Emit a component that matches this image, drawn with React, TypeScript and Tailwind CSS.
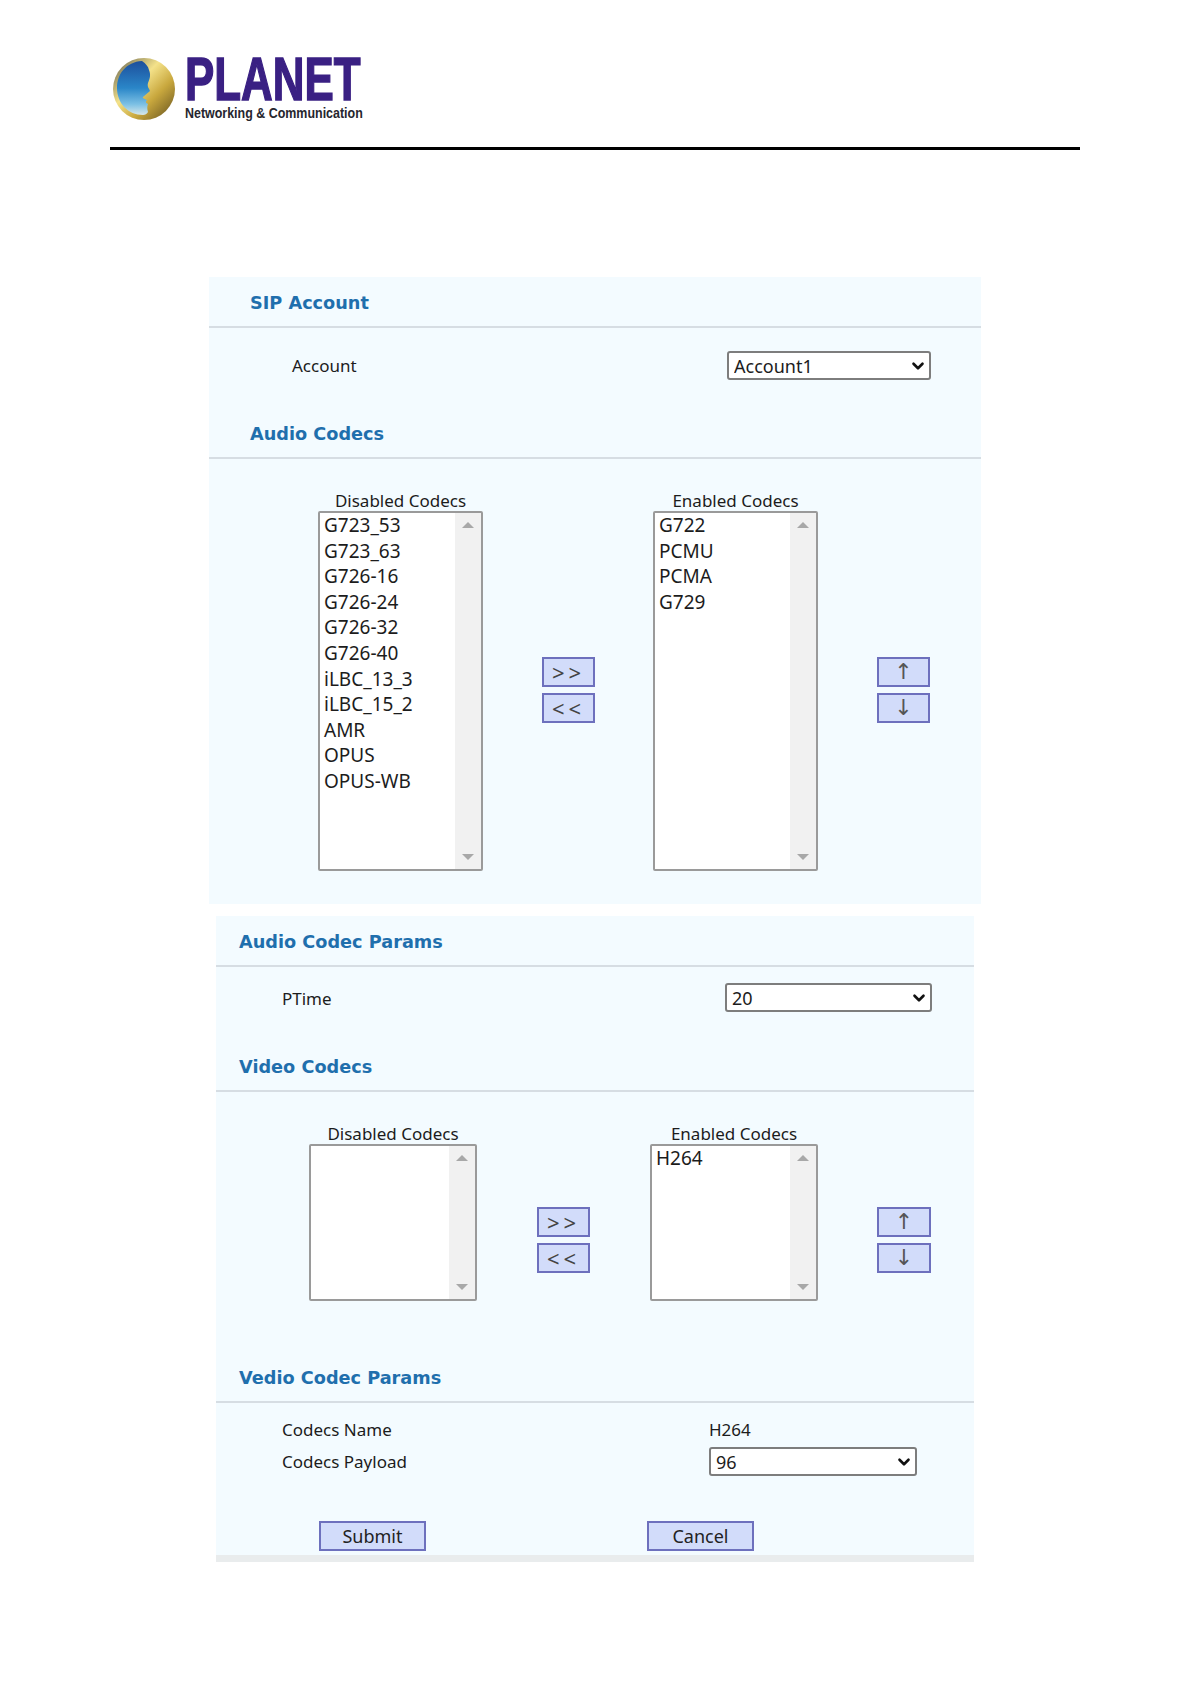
import React from 'react';
import { ChevronDown } from 'lucide-react';

const uiFont = "font-['Noto_Sans','Liberation_Sans',sans-serif]";

const Logo = () => (
  <div className="flex h-[66px]">
    <svg width="66" height="66" viewBox="0 0 66 66" className="ml-[2px] mt-[1px] shrink-0">
      <defs>
        <linearGradient id="sky" x1="0" y1="0" x2="0" y2="1">
          <stop offset="0" stopColor="#1d4f9c" />
          <stop offset="0.5" stopColor="#2a86c8" />
          <stop offset="0.8" stopColor="#7cc0e4" />
          <stop offset="1" stopColor="#d8e8ea" />
        </linearGradient>
        <linearGradient id="gold" x1="0" y1="0" x2="1" y2="1">
          <stop offset="0" stopColor="#5d5a4c" />
          <stop offset="0.4" stopColor="#f4e28a" />
          <stop offset="0.65" stopColor="#c9a83e" />
          <stop offset="1" stopColor="#5f4c1c" />
        </linearGradient>
      </defs>
      <circle cx="32" cy="33" r="31" fill="url(#gold)" />
      <path
        d="M30 5C14 6 5 18 5 32c0 15 11 27 26 27 2 0 4-1 5-3-1-3-1-6 0-8-2-1-3-2-1-4-2-1-5-2-4-3l7-6c-1-3-3-4-2-8 2-5 3-8 1-13-1-4-3-6-7-9z"
        fill="url(#sky)"
      />
    </svg>
    <div className="ml-[7px] w-[178px]">
      <div className="h-[48px] origin-left scale-x-[0.72] font-['Liberation_Sans',sans-serif] text-[61px] leading-[48px] font-bold whitespace-nowrap text-[#3a2083] [-webkit-text-stroke:1.5px_#3a2083]">
        PLANET
      </div>
      <div className="mt-[1px] origin-left scale-x-[0.83] font-['Liberation_Sans',sans-serif] text-[15px] leading-[17px] font-bold whitespace-nowrap text-[#26262e]">
        Networking &amp; Communication
      </div>
    </div>
  </div>
);

const SectionHead = ({ title, indent }: { title: string; indent: string }) => (
  <div className={`flex h-[51px] items-center border-b-2 border-[#d6dde3] pt-[4px] ${indent}`}>
    <h2 className="font-['DejaVu_Sans',sans-serif] text-[17.7px] font-bold text-[#1f6fad]">{title}</h2>
  </div>
);

const NativeSelect = ({ value, width }: { value: string; width: string }) => (
  <div className={`relative h-[29px] ${width}`}>
    <select
      defaultValue={value}
      className="h-full w-full appearance-none rounded-[3px] border-2 border-[#7d7d7d] bg-white pl-[5px] text-[18px] text-[#1c1c1c]"
    >
      <option>{value}</option>
    </select>
    <ChevronDown className="absolute top-[6px] right-[4px] h-[18px] w-[18px] text-[#111]" strokeWidth={3.5} />
  </div>
);

const ListBox = ({ title, items, className }: { title: string; items: string[]; className: string }) => (
  <div className="shrink-0">
    <div className="h-[20px] text-center text-[17px] leading-[20px] text-[#1c1c1c]">{title}</div>
    <div className={`flex rounded-[2px] border-2 border-[#9a9a9a] bg-white ${className}`}>
      <ul className="min-w-0 flex-1 pl-[4px]">
        {items.map((item) => (
          <li key={item} className="h-[25.6px] text-[19px] leading-[25.6px] text-[#1c1c1c]">
            {item}
          </li>
        ))}
      </ul>
      <div className="flex w-[26px] flex-col items-center justify-between bg-[#f1f1f1] py-[9px]">
        <span className="h-0 w-0 border-x-[6px] border-b-[6px] border-x-transparent border-b-[#a8a8a8]" />
        <span className="h-0 w-0 border-x-[6px] border-t-[6px] border-x-transparent border-t-[#a8a8a8]" />
      </div>
    </div>
  </div>
);

const MoveButton = ({ label, width = 'w-[53px]', size = 'text-[18px] text-[#222]' }: { label: string; width?: string; size?: string }) => (
  <button className={`h-[30px] border-2 border-[#6d70bd] bg-[#d2dcfa] leading-none ${size} ${width}`}>
    {label}
  </button>
);

const MoveButtons = ({ top, bottom, width, size }: { top: string; bottom: string; width?: string; size?: string }) => (
  <div className="flex shrink-0 flex-col gap-[6px]">
    <MoveButton label={top} width={width} size={size} />
    <MoveButton label={bottom} width={width} size={size} />
  </div>
);

const audioDisabled = [
  'G723_53',
  'G723_63',
  'G726-16',
  'G726-24',
  'G726-32',
  'G726-40',
  'iLBC_13_3',
  'iLBC_15_2',
  'AMR',
  'OPUS',
  'OPUS-WB',
];
const audioEnabled = ['G722', 'PCMU', 'PCMA', 'G729'];

const chevrons = 'text-[22px] tracking-[4px] text-[#444]';
const arrows = "font-['DejaVu_Sans',sans-serif] text-[22px] text-[#555]";

const App = () => {
  return (
    <div className={`h-[1684px] w-[1190px] overflow-hidden bg-white ${uiFont}`}>
      <header className="mx-[110px] h-[150px] border-b-[3px] border-black pt-[55px]">
        <Logo />
      </header>

      {/* first capture of the settings page */}
      <section className="mt-[127px] ml-[209px] h-[627px] w-[772px] bg-[#f3fbff]">
        <SectionHead title="SIP Account" indent="pl-[41px]" />
        <div className="mt-[23px] flex items-center justify-between pr-[50px] pl-[83px]">
          <span className="text-[17px] text-[#1c1c1c]">Account</span>
          <NativeSelect value="Account1" width="w-[204px]" />
        </div>
        <div className="mt-[28px]">
          <SectionHead title="Audio Codecs" indent="pl-[41px]" />
        </div>
        <div className="mt-[32px] flex items-center pl-[109px]">
          <ListBox title="Disabled Codecs" items={audioDisabled} className="h-[360px] w-[165px]" />
          <div className="mt-[18px] ml-[59px]">
            <MoveButtons top=">>" bottom="<<" size={chevrons} />
          </div>
          <div className="ml-[58px]">
            <ListBox title="Enabled Codecs" items={audioEnabled} className="h-[360px] w-[165px]" />
          </div>
          <div className="mt-[18px] ml-[59px]">
            <MoveButtons top="↑" bottom="↓" size={arrows} />
          </div>
        </div>
      </section>

      {/* second capture, slightly narrower */}
      <section className="mt-[12px] ml-[216px] h-[646px] w-[758px] border-b-[7px] border-[#e9eced] bg-[#f3fbff]">
        <SectionHead title="Audio Codec Params" indent="pl-[23px]" />
        <div className="mt-[16px] flex items-center justify-between pr-[42px] pl-[66px]">
          <span className="pt-[2px] text-[17px] text-[#1c1c1c]">PTime</span>
          <NativeSelect value="20" width="w-[207px]" />
        </div>
        <div className="mt-[29px]">
          <SectionHead title="Video Codecs" indent="pl-[23px]" />
        </div>
        <div className="mt-[32px] flex items-center pl-[93px]">
          <ListBox title="Disabled Codecs" items={[]} className="h-[157px] w-[168px]" />
          <div className="mt-[54px] ml-[60px]">
            <MoveButtons top=">>" bottom="<<" size={chevrons} />
          </div>
          <div className="ml-[60px]">
            <ListBox title="Enabled Codecs" items={['H264']} className="h-[157px] w-[168px]" />
          </div>
          <div className="mt-[54px] ml-[59px]">
            <MoveButtons top="↑" bottom="↓" width="w-[54px]" size={arrows} />
          </div>
        </div>
        <div className="mt-[51px]">
          <SectionHead title="Vedio Codec Params" indent="pl-[23px]" />
        </div>
        <div className="mt-[15px] flex h-[24px] items-center text-[17px] text-[#1c1c1c]">
          <span className="w-[493px] pl-[66px]">Codecs Name</span>
          <span>H264</span>
        </div>
        <div className="mt-[5px] flex items-center text-[17px] text-[#1c1c1c]">
          <span className="w-[493px] pl-[66px]">Codecs Payload</span>
          <NativeSelect value="96" width="w-[208px]" />
        </div>
        <div className="mt-[45px] flex pl-[103px]">
          <MoveButton label="Submit" width="w-[107px]" />
          <div className="ml-[221px]">
            <MoveButton label="Cancel" width="w-[107px]" />
          </div>
        </div>
      </section>
    </div>
  );
};

export default App;
